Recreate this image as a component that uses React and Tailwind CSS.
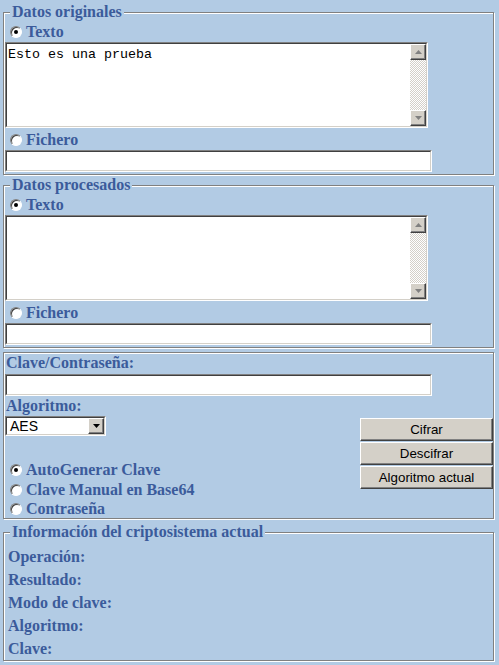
import React from 'react';

const serif = "font-['Liberation_Serif',serif] font-bold text-[16px] text-[#3b5b9b]";

function Radio({ checked }) {
  return (
    <span className="inline-flex items-center justify-center w-[12px] h-[12px] rounded-full bg-white border border-t-[#808080] border-l-[#808080] border-b-white border-r-white shadow-[inset_1px_1px_0_#404040]">
      {checked && <span className="w-[4px] h-[4px] rounded-full bg-black" />}
    </span>
  );
}

function RadioRow({ label, checked, className = '' }) {
  return (
    <div className={`flex items-center gap-[4px] pl-[6px] ${className}`}>
      <Radio checked={checked} />
      <span>{label}</span>
    </div>
  );
}

function Inset({ className = '', children }) {
  return (
    <div className={`border border-t-[#808080] border-l-[#808080] border-b-white border-r-white ${className}`}>
      <div className="flex h-full border border-t-[#404040] border-l-[#404040] border-b-[#d4d0c8] border-r-[#d4d0c8] bg-white">
        {children}
      </div>
    </div>
  );
}

function Arrow({ up, color = '#808080' }) {
  return (
    <svg width="7" height="4" viewBox="0 0 7 4">
      <path d={up ? 'M3.5 0L7 4H0z' : 'M0 0h7L3.5 4z'} fill={color} />
    </svg>
  );
}

function ScrollButton({ up }) {
  return (
    <div className="w-[16px] h-[16px] flex items-center justify-center bg-[#d4d0c8] border border-t-white border-l-white border-b-[#404040] border-r-[#404040] shadow-[inset_-1px_-1px_0_#808080]">
      <Arrow up={up} />
    </div>
  );
}

function TextBox({ value }) {
  return (
    <Inset className="ml-[1px] w-[423px] h-[86px]">
      <textarea
        readOnly
        value={value}
        className="flex-1 resize-none outline-none px-[1px] pt-[3px] font-['Liberation_Mono',monospace] text-[13.33px] leading-[15px] text-black font-normal"
      />
      <div className="w-[16px] flex flex-col">
        <ScrollButton up />
        <div className="flex-1 bg-[image:repeating-conic-gradient(#d4d0c8_0%_25%,#ffffff_0%_50%)] bg-[length:2px_2px]" />
        <ScrollButton />
      </div>
    </Inset>
  );
}

function Field() {
  return <Inset className="ml-[1px] w-[427px] h-[22px]" />;
}

function Fieldset({ legend, className = '', children }) {
  return (
    <fieldset
      className={`w-[491px] ml-[3px] border border-[#808080] shadow-[inset_1px_1px_0_#fff,1px_1px_0_#fff] ${className}`}
    >
      {legend && (
        <legend className="ml-[6px] px-[2px] leading-[18px] bg-[#b2cbe4]">{legend}</legend>
      )}
      {children}
    </fieldset>
  );
}

function Button({ children }) {
  return (
    <button className="w-[133px] h-[23px] bg-[#d4d0c8] border border-t-white border-l-white border-b-[#404040] border-r-[#404040] shadow-[inset_-1px_-1px_0_#808080] font-['Liberation_Sans',sans-serif] font-normal text-[13.33px] text-black">
      {children}
    </button>
  );
}

function DataBlock({ legend, text, className = '' }) {
  return (
    <Fieldset legend={legend} className={`pb-[2px] ${className}`}>
      <RadioRow label="Texto" checked className="mt-[2px] h-[18px]" />
      <div className="mt-[1px]">
        <TextBox value={text} />
      </div>
      <RadioRow label="Fichero" className="mt-[3px] h-[18px]" />
      <div className="mt-[1px]">
        <Field />
      </div>
    </Fieldset>
  );
}

export default function App() {
  const info = ['Operación:', 'Resultado:', 'Modo de clave:', 'Algoritmo:', 'Clave:'];

  return (
    <div className={`min-h-screen bg-[#b2cbe4] pt-[3px] pb-[3px] leading-[18px] ${serif}`}>
      <DataBlock legend="Datos originales" text="Esto es una prueba" />
      <DataBlock legend="Datos procesados" text="" className="mt-[1px]" />

      <Fieldset className="mt-[4px]">
        <div className="mt-[1px] h-[18px] pl-[2px]">Clave/Contraseña:</div>
        <div className="mt-[2px]">
          <Field />
        </div>
        <div className="mt-[1px] h-[18px] pl-[2px]">Algoritmo:</div>
        <div className="flex justify-between">
          <div className="flex flex-col">
            <div className="mt-[1px] ml-[1px] w-[101px] h-[20px] border border-t-[#808080] border-l-[#808080] border-b-white border-r-white">
              <div className="flex items-center h-full bg-white border border-t-[#404040] border-l-[#404040] border-b-[#d4d0c8] border-r-[#d4d0c8]">
                <span className="flex-1 pl-[3px] font-['Liberation_Sans',sans-serif] font-normal text-[14px] text-black leading-[16px]">
                  AES
                </span>
                <div className="w-[16px] h-[16px] flex items-center justify-center bg-[#d4d0c8] border border-t-white border-l-white border-b-[#404040] border-r-[#404040] shadow-[inset_-1px_-1px_0_#808080]">
                  <Arrow color="#000" />
                </div>
              </div>
            </div>
            <div className="mt-[24px]">
              <RadioRow label="AutoGenerar Clave" checked className="h-[20px]" />
              <RadioRow label="Clave Manual en Base64" className="h-[20px]" />
              <RadioRow label="Contraseña" className="h-[18px]" />
            </div>
          </div>
          <div className="mt-[3px] flex flex-col gap-[1px]">
            <Button>Cifrar</Button>
            <Button>Descifrar</Button>
            <Button>Algoritmo actual</Button>
          </div>
        </div>
      </Fieldset>

      <Fieldset legend="Información del criptosistema actual" className="mt-[4px]">
        <div className="mt-[4px] pl-[4px]">
          {info.map((t) => (
            <div key={t} className="leading-[23px]">
              {t}
            </div>
          ))}
        </div>
      </Fieldset>
    </div>
  );
}
